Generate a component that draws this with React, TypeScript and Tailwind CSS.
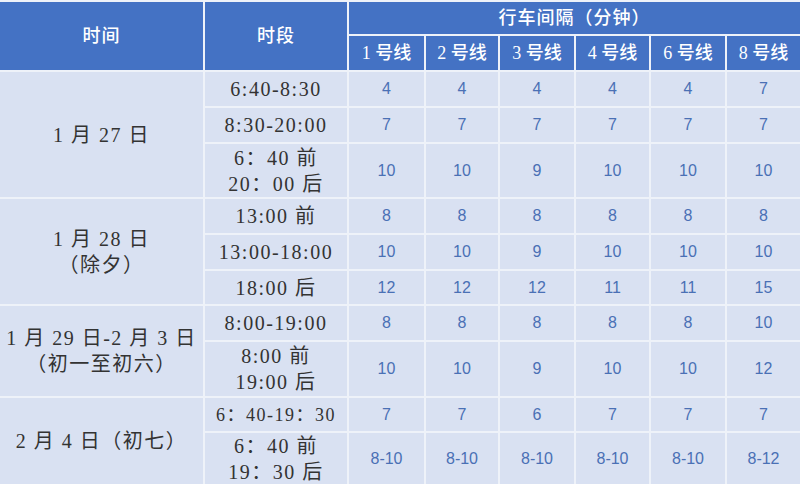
const serif = "font-['Liberation_Serif','Noto_Sans_CJK_SC',serif]";
const sans = "font-['Liberation_Sans','Noto_Sans_CJK_SC',sans-serif]";

type Slot = { time: string[]; small?: boolean; values: string[] };
type Group = { label: string[]; span: string; slots: Slot[] };

const lines = ["1 号线", "2 号线", "3 号线", "4 号线", "6 号线", "8 号线"];

const groups: Group[] = [
  {
    label: ["1 月 27 日"],
    span: "row-span-3",
    slots: [
      { time: ["6:40-8:30"], values: ["4", "4", "4", "4", "4", "7"] },
      { time: ["8:30-20:00"], values: ["7", "7", "7", "7", "7", "7"] },
      { time: ["6：40 前", "20：00 后"], values: ["10", "10", "9", "10", "10", "10"] },
    ],
  },
  {
    label: ["1 月 28 日", "（除夕）"],
    span: "row-span-3",
    slots: [
      { time: ["13:00 前"], values: ["8", "8", "8", "8", "8", "8"] },
      { time: ["13:00-18:00"], values: ["10", "10", "9", "10", "10", "10"] },
      { time: ["18:00 后"], values: ["12", "12", "12", "11", "11", "15"] },
    ],
  },
  {
    label: ["1 月 29 日-2 月 3 日", "（初一至初六）"],
    span: "row-span-2",
    slots: [
      { time: ["8:00-19:00"], values: ["8", "8", "8", "8", "8", "10"] },
      { time: ["8:00 前", "19:00 后"], values: ["10", "10", "9", "10", "10", "12"] },
    ],
  },
  {
    label: ["2 月 4 日（初七）"],
    span: "row-span-2",
    slots: [
      { time: ["6：40-19：30"], small: true, values: ["7", "7", "6", "7", "7", "7"] },
      { time: ["6：40 前", "19：30 后"], values: ["8-10", "8-10", "8-10", "8-10", "8-10", "8-12"] },
    ],
  },
];

export default function App() {
  return (
    <div className="w-[800px] h-[484px] overflow-hidden bg-[#eef2f9] pt-[2px]">
      <div className="grid grid-cols-[203px_142px_75px_72px_74px_73px_74px_73px] grid-rows-[32px_34px_34px_34px_53px_34px_34px_33px_34px_54px_33px_51px] gap-[2px]">
        {/* header */}
        <div className={`row-span-2 bg-[#4472c4] flex items-center justify-center text-white text-[18px] font-medium tracking-[1px] ${serif}`}>
          时间
        </div>
        <div className={`row-span-2 bg-[#4472c4] flex items-center justify-center text-white text-[18px] font-medium tracking-[1px] ${serif}`}>
          时段
        </div>
        <div className={`col-span-6 bg-[#4472c4] flex items-center justify-center text-white text-[18px] font-medium tracking-[1px] ${serif}`}>
          行车间隔（分钟）
        </div>
        {lines.map((l) => (
          <div
            key={l}
            className={`bg-[#4472c4] flex items-center justify-center text-white text-[18px] font-medium ${serif}`}
          >
            {l}
          </div>
        ))}

        {/* body */}
        {groups.map((g, gi) => [
          <div
            key={`g${gi}`}
            className={`${g.span} bg-[#d9e1f2] flex flex-col items-center justify-center text-[#333] text-[20px] leading-[26px] tracking-[1.5px] ${serif}`}
          >
            {g.label.map((t) => (
              <span key={t}>{t}</span>
            ))}
          </div>,
          ...g.slots.flatMap((s, si) => [
            <div
              key={`t${gi}-${si}`}
              className={`bg-[#d9e1f2] flex flex-col items-center justify-center text-[#333] leading-[26px] tracking-[1.5px] ${
                s.small ? "text-[18px]" : "text-[20px]"
              } ${serif}`}
            >
              {s.time.map((t) => (
                <span key={t}>{t}</span>
              ))}
            </div>,
            ...s.values.map((v, vi) => (
              <div
                key={`v${gi}-${si}-${vi}`}
                className={`bg-[#d9e1f2] flex items-center justify-center text-[#4a70b5] text-[16px] ${sans}`}
              >
                {v}
              </div>
            )),
          ]),
        ])}
      </div>
    </div>
  );
}
